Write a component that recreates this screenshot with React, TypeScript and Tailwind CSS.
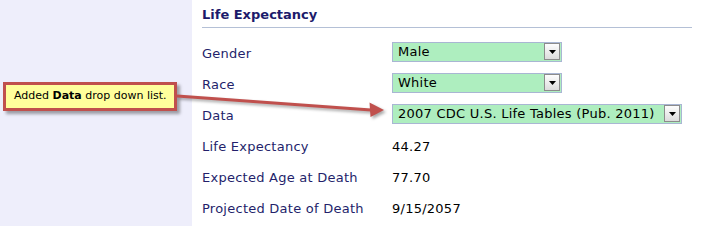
import React from 'react';

const font = { fontFamily: '"DejaVu Sans", Verdana, sans-serif' };

function SelectBox({ value, width }: { value: string; width: string }) {
  return (
    <div
      className={`flex h-[20px] ${width} items-center justify-between border border-[#a9b6d3] bg-[#aeeebf] pl-[5px] pr-[1px]`}
    >
      <span className="text-[13px] leading-none tracking-[0.25px] text-black">{value}</span>
      <span className="flex h-[17px] w-[16px] items-center justify-center border border-[#8c8c8c] bg-gradient-to-b from-[#fdfdfd] to-[#dcdcdc]">
        <svg width="7" height="4" viewBox="0 0 7 4">
          <path d="M0 0h7L3.5 4z" fill="#000" />
        </svg>
      </span>
    </div>
  );
}

function Value({ children }: { children: React.ReactNode }) {
  return <span className="block pt-[4px] tracking-[0.25px] text-black">{children}</span>;
}

const rows: { label: string; control: React.ReactNode }[] = [
  { label: 'Gender', control: <SelectBox value="Male" width="w-[170px]" /> },
  { label: 'Race', control: <SelectBox value="White" width="w-[170px]" /> },
  {
    label: 'Data',
    control: (
      <SelectBox value="2007 CDC U.S. Life Tables (Pub. 2011)" width="w-[290px]" />
    ),
  },
  { label: 'Life Expectancy', control: <Value>44.27</Value> },
  { label: 'Expected Age at Death', control: <Value>77.70</Value> },
  { label: 'Projected Date of Death', control: <Value>9/15/2057</Value> },
];

export default function App() {
  return (
    <div className="relative flex h-[226px] w-[702px] overflow-hidden bg-white" style={font}>
      <div className="w-[192px] shrink-0 bg-[#eeeefb]" />
      <div className="flex-1 pl-[10px] pr-[10px] pt-[5px]">
        <div className="border-b border-[#b4c0d6] pb-[2px] text-[13px] font-bold leading-[20px] text-[#1c1b6b]">
          Life Expectancy
        </div>
        <div className="mt-[8px]">
          {rows.map((row) => (
            <div key={row.label} className="flex h-[31px] items-center text-[13px]">
              <div className="w-[190px] pt-[4px] tracking-[0.25px] text-[#241f6b]">{row.label}</div>
              <div>{row.control}</div>
            </div>
          ))}
        </div>
      </div>

      {/* callout note */}
      <div className="absolute left-[3px] top-[82px] flex h-[29px] w-[174px] items-center border-[3px] border-[#c0504d] bg-[#ffff9c] pl-[8px] text-[11px] text-black shadow-[3px_3px_3px_rgba(0,0,0,0.35)]">
        Added&nbsp;<b>Data</b>&nbsp;drop down list.
      </div>

      <svg
        className="pointer-events-none absolute left-0 top-0"
        width="702"
        height="226"
        style={{ filter: 'drop-shadow(2px 2px 1.5px rgba(0,0,0,0.35))' }}
      >
        <line x1="177" y1="96" x2="371" y2="110" stroke="#c0504d" strokeWidth="3" />
        <polygon points="384,110 369.5,102.5 370.5,117" fill="#c0504d" />
      </svg>
    </div>
  );
}
